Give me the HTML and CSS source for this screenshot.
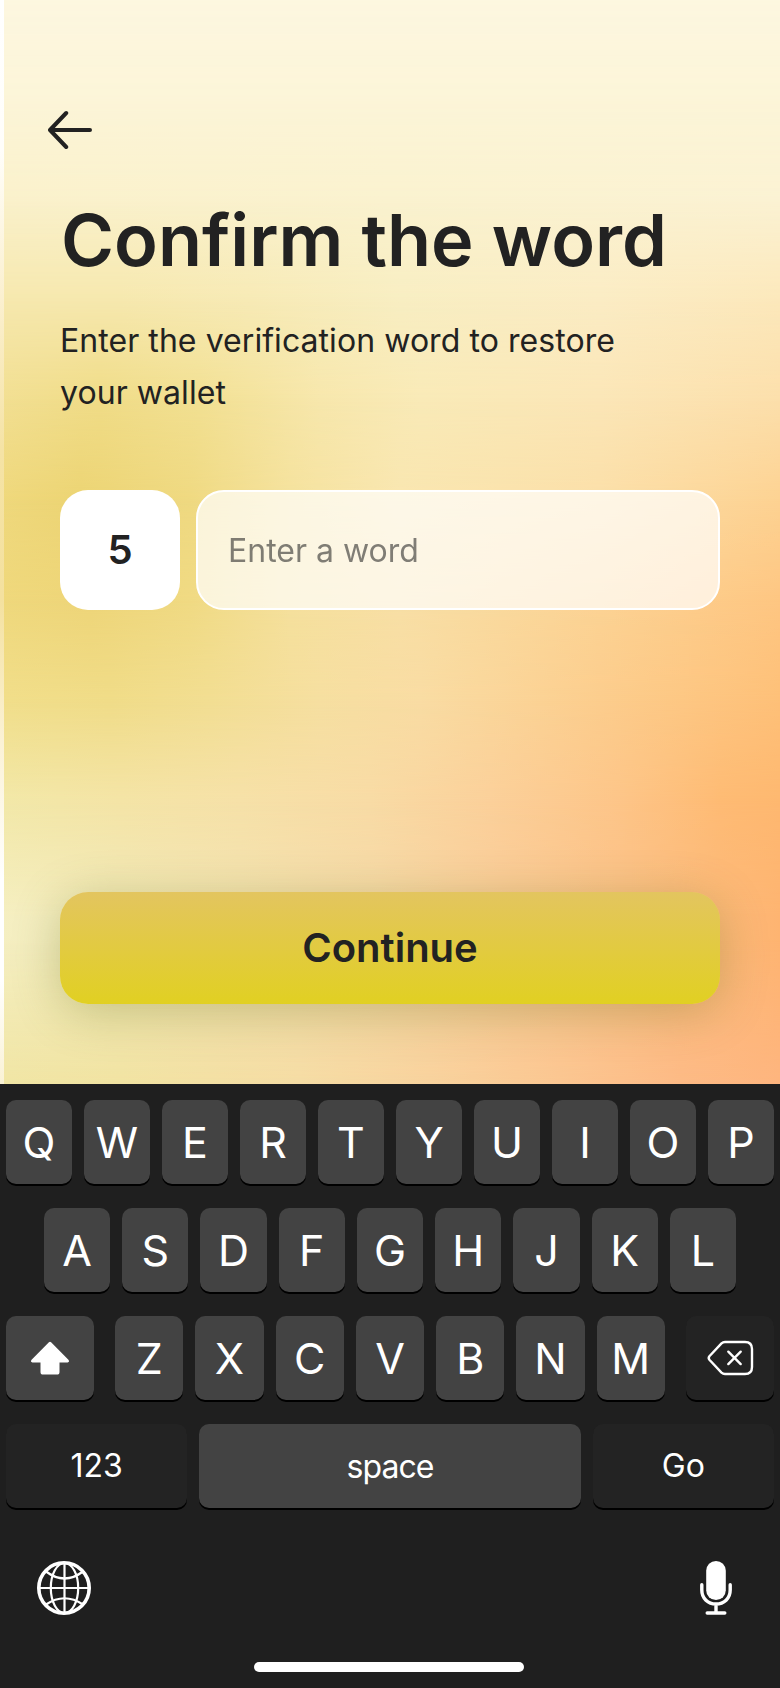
FILE: index.html
```html
<!DOCTYPE html>
<html lang="en">
<head>
<meta charset="utf-8">
<title>Confirm the word</title>
<link rel="stylesheet" href="styles.css">
</head>
<body>
<main class="screen">
  <div class="backdrop" aria-hidden="true">
    <i class="band b0"></i><i class="band b1"></i><i class="band b2"></i><i class="band b3"></i><i class="band b4"></i><i class="band b5"></i><i class="band b6"></i><i class="band b7"></i><i class="band b8"></i><i class="band b9"></i><i class="band b10"></i>
    <i class="edge"></i>
  </div>
  <section class="content">
    <button class="back" aria-label="Back">
      <svg width="44" height="40" viewBox="0 0 44 40" fill="none" stroke="#222" stroke-width="4" stroke-linecap="round" stroke-linejoin="round"><path d="M18.200 3 2 20l16.200 17M2.500 20H42"/></svg>
    </button>
    <h1 class="title">Confirm the word</h1>
    <p class="lead">Enter the verification word to restore<br>your wallet</p>
    <div class="entry">
      <span class="index">5</span>
      <input class="field" type="text" placeholder="Enter a word">
    </div>
    <button class="continue">Continue</button>
  </section>
  <section class="keyboard">
    <div class="row"><span class="key">Q</span><span class="key">W</span><span class="key">E</span><span class="key">R</span><span class="key">T</span><span class="key">Y</span><span class="key">U</span><span class="key">I</span><span class="key">O</span><span class="key">P</span></div>
    <div class="row home-row"><span class="key">A</span><span class="key">S</span><span class="key">D</span><span class="key">F</span><span class="key">G</span><span class="key">H</span><span class="key">J</span><span class="key">K</span><span class="key">L</span></div>
    <div class="row">
      <span class="key shift"><svg width="40" height="36" viewBox="0 0 40 36" fill="#fff"><path d="M18.9 2.2Q20 1.2 21.1 2.2L38.4 19.7Q40 21.9 37.6 22.4H29.5V32Q29.5 34.6 26.9 34.6H13.1Q10.5 34.6 10.5 32V22.4H2.4Q0 21.9 1.6 19.7Z"/></svg></span>
      <span class="key">Z</span><span class="key">X</span><span class="key">C</span><span class="key">V</span><span class="key">B</span><span class="key">N</span><span class="key">M</span>
      <span class="key dark erase"><svg width="48" height="36" viewBox="0 0 48 36" fill="none" stroke="#fff" stroke-width="2.4" stroke-linecap="round" stroke-linejoin="round"><path d="M19 2H39Q46 2 46 9V27Q46 34 39 34H19Q17 34 15.500 32.600L3.400 19.800Q2 18 3.400 16.200L15.500 3.400Q17 2 19 2ZM22.300 11.700 34.700 24.100M34.700 11.700 22.300 24.100"/></svg></span>
    </div>
    <div class="row bottom-row"><span class="key dark word">123</span><span class="key space">space</span><span class="key dark word">Go</span></div>
    <div class="tools">
      <svg width="54" height="54" viewBox="0 0 54 54" fill="none" stroke="#fff" stroke-width="2.200"><circle cx="27" cy="27" r="25.200" stroke-width="3.600"/><path d="M27.500 2V52M2 27H52"/><ellipse cx="27.500" cy="27" rx="13.700" ry="25"/><path d="M9 10.500Q27.500 24.500 46 10.500M9 43.500Q27.500 31 46 43.500"/></svg>
      <svg width="32" height="54" viewBox="0 0 32 54" fill="none" stroke="#fff" stroke-linecap="round"><rect x="6.200" y="0" width="19.600" height="39" rx="9.800" fill="#fff" stroke="none"/><path stroke-width="3.400" d="M1.800 23.800V29C1.800 37.500 8 43 16 43S30.200 37.500 30.200 29V23.800M16 43V51M7.200 52H24.800"/></svg>
    </div>
    <div class="home"></div>
  </section>
</main>
</body>
</html>
```
FILE: styles.css
```css
* { box-sizing: border-box; }
body { margin: 0; font-family: Inter, "Liberation Sans", sans-serif; color: #222; }
button { border: 0; padding: 0; background: none; font: inherit; color: inherit; }
svg { display: block; flex: none; }

.screen { display: grid; width: 780px; height: 1688px; grid-template-rows: 1084px 604px; overflow: hidden; }

/* Colour mesh: each band fades in over the one before it */
.backdrop { grid-area: 1 / 1; display: grid; }
.band { grid-area: 1 / 1; mask-image: linear-gradient(to bottom, transparent var(--from), #000 var(--to)); }
.b0 { background: #fdf7e0; mask-image: none; }
.b1 { --from: 0px; --to: 100px; background: #fcf5d8; }
.b2 { --from: 100px; --to: 200px; background: linear-gradient(90deg, #faf1cb, #faf2cf 50%, #fbf2d3); }
.b3 { --from: 200px; --to: 300px; background: linear-gradient(90deg, #f6e8ae 0, #f6e8ae 120px, #f7eab5 250px, #f8eec2 400px, #fbecc4 600px, #fce8bb 780px); }
.b4 { --from: 300px; --to: 400px; background: linear-gradient(90deg, #f2df92 0, #f0dc87 100px, #f2e092 200px, #f7e7ac 320px, #f9eab7 420px, #fbe6b7 600px, #fcdfab 780px); }
.b5 { --from: 400px; --to: 500px; background: linear-gradient(90deg, #efd87c 0, #ecd473 80px, #efd981 190px, #f5e29d 290px, #f9e6b0 400px, #fbdfa8 600px, #fdd292 780px); }
.b6 { --from: 500px; --to: 600px; background: linear-gradient(90deg, #efd87c 0, #eed578 90px, #f0da83 190px, #f5e09c 290px, #f8dfa5 400px, #fcd394 600px, #fec682 780px); }
.b7 { --from: 600px; --to: 700px; background: linear-gradient(90deg, #f1de8a 0, #f0dc88 110px, #f2de92 210px, #f6dfa0 320px, #f9dca3 420px, #fccd8d 600px, #fec078 780px); }
.b8 { --from: 700px; --to: 800px; background: linear-gradient(90deg, #f2e8a8 0, #f4e4a6 120px, #f6e1a8 240px, #f8dba5 370px, #fbd09a 490px, #fdc588 620px, #febb74 720px, #feb870 780px); }
.b9 { --from: 800px; --to: 920px; background: linear-gradient(90deg, #f5efc2 0, #f3ebbc 100px, #f4e3b2 240px, #f7d9a7 380px, #fbcc98 500px, #fcc086 630px, #feb471 780px); }
.b10 { --from: 940px; --to: 1084px; background: linear-gradient(90deg, #f0e5a4 0, #f1e3a2 120px, #f5dca4 300px, #f8d29d 430px, #fbc691 560px, #fdba85 680px, #feb57e 780px); }
.edge { grid-area: 1 / 1; z-index: 1; width: 4px; background: linear-gradient(#fff 0, #fffefa 150px, #fbf0cf 300px, #f5e3a5 450px, #f4e19f 600px, #fbf2d5 740px, #fff 880px, #fff 980px, #faf2d5 1084px); }

.content { grid-area: 1 / 1; z-index: 1; display: flex; flex-direction: column; align-items: flex-start; padding: 110px 60px 80px; }
.back { margin-left: -12px; height: 40px; }
.title { margin: 46px 0 0 1px; font-size: 72px; line-height: 88px; font-weight: 600; white-space: nowrap; }
.lead { margin: 31px 0 0; font-size: 32px; line-height: 52px; letter-spacing: .06px; white-space: nowrap; }
.entry { display: flex; gap: 16px; width: 660px; margin-top: 71px; }
.index { width: 120px; height: 120px; padding-bottom: 2px; border-radius: 28px; background: #fff; display: grid; place-items: center; font-size: 40px; font-weight: 600; }
.field { flex: 1; min-width: 0; height: 120px; padding: 0 30px; border: 2px solid #fff; border-radius: 28px; background: rgba(255, 255, 255, .7); font: 400 32px Inter, sans-serif; color: #222; outline: 0; }
.field::placeholder { color: #222; opacity: .57; }
.continue { width: 660px; height: 112px; margin-top: auto; padding-bottom: 2px; border-radius: 28px; background: linear-gradient(#e3c55f, #e1d022); box-shadow: 0 8px 48px rgba(92, 106, 15, .3); font-size: 40px; font-weight: 600; text-align: center; }

.keyboard { grid-area: 2 / 1; display: flex; flex-direction: column; background: #1f1f1f; padding: 16px 6px; color: #fff; }
.row { display: flex; gap: 12px; height: 84px; margin-bottom: 24px; }
.home-row { padding: 0 38px; }
.key { flex: 1 1 0; display: grid; place-items: center; border-radius: 10px; background: #434343; box-shadow: 0 2px 0 #000; font-size: 43px; }
.shift { flex: 0 0 87.700px; margin-right: 9.500px; }
.erase { flex: 0 0 87.700px; margin-left: 9.500px; }
.dark { background: #232323; }
.word { flex: 0 0 181.300px; font-size: 32px; padding-bottom: 2px; }
.space { font-size: 32px; padding-top: 1px; letter-spacing: -.9px; }
.bottom-row { margin-bottom: 53px; }
.tools { display: flex; justify-content: space-between; padding: 0 42px 0 31px; }
.home { width: 270px; height: 10px; margin: auto 0 0 248px; border-radius: 5px; background: #fff; }
```
